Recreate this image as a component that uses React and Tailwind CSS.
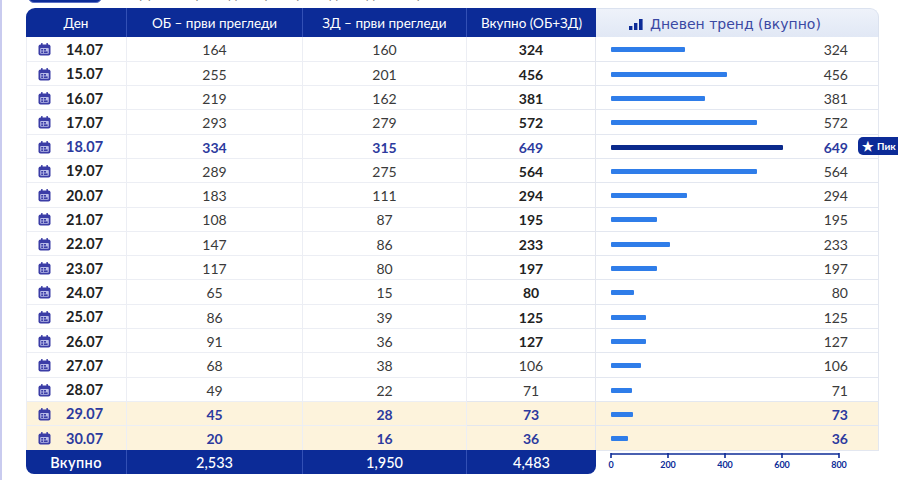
import React from "react";

const rows = [
  { d: "14.07", ob: 164, zd: 160, t: 324, w: 74 },
  { d: "15.07", ob: 255, zd: 201, t: 456, w: 116 },
  { d: "16.07", ob: 219, zd: 162, t: 381, w: 94 },
  { d: "17.07", ob: 293, zd: 279, t: 572, w: 146 },
  { d: "18.07", ob: 334, zd: 315, t: 649, w: 172, peak: true },
  { d: "19.07", ob: 289, zd: 275, t: 564, w: 146 },
  { d: "20.07", ob: 183, zd: 111, t: 294, w: 76 },
  { d: "21.07", ob: 108, zd: 87, t: 195, w: 46 },
  { d: "22.07", ob: 147, zd: 86, t: 233, w: 59 },
  { d: "23.07", ob: 117, zd: 80, t: 197, w: 46 },
  { d: "24.07", ob: 65, zd: 15, t: 80, w: 23 },
  { d: "25.07", ob: 86, zd: 39, t: 125, w: 35 },
  { d: "26.07", ob: 91, zd: 36, t: 127, w: 35 },
  { d: "27.07", ob: 68, zd: 38, t: 106, w: 30, light: true },
  { d: "28.07", ob: 49, zd: 22, t: 71, w: 21, light: true },
  { d: "29.07", ob: 45, zd: 28, t: 73, w: 22, hl: true },
  { d: "30.07", ob: 20, zd: 16, t: 36, w: 17, hl: true },
];

function CalIcon() {
  return (
    <svg width="13" height="13" viewBox="0 0 13 13">
      <rect x="0.5" y="1.5" width="12" height="11" rx="2" fill="#3b3da6" />
      <rect x="3" y="0" width="1.6" height="3" rx="0.6" fill="#3b3da6" />
      <rect x="8.4" y="0" width="1.6" height="3" rx="0.6" fill="#3b3da6" />
      <rect x="2.2" y="5" width="8.6" height="5.8" rx="0.8" fill="#b9bce8" />
      <rect x="3.2" y="6" width="2" height="1.6" fill="#3b3da6" />
      <rect x="6" y="6" width="2" height="1.6" fill="#3b3da6" />
      <rect x="3.2" y="8.4" width="2" height="1.6" fill="#3b3da6" />
      <rect x="6" y="8.4" width="3.6" height="1.6" fill="#3b3da6" />
    </svg>
  );
}

function TrendIcon() {
  return (
    <svg width="14" height="11" viewBox="0 0 14 11">
      <rect x="0" y="7" width="3.4" height="4" fill="#0c2b97" />
      <rect x="5" y="4" width="3.4" height="7" fill="#0c2b97" />
      <rect x="10" y="0" width="3.6" height="11" fill="#0c2b97" />
    </svg>
  );
}

export default function App() {
  return (
    <div
      className="w-[898px] h-[480px] overflow-hidden bg-white border-l-2 border-[#c9cbef]"
      style={{ fontFamily: "Lato, 'Noto Sans', sans-serif" }}
    >
      <div className="h-[8px] overflow-hidden flex items-end gap-[38px] pl-[26px]">
        <div className="w-[74px] h-[14px] mb-[5px] rounded-md bg-[#0c2b97] border border-[#5a6fc4] shrink-0" />
        <div className="h-[14px] mb-[7px] text-[13px] leading-[14px] text-[#888] whitespace-nowrap">
          Дневен преглед на први прегледи по ден и вкупно
        </div>
      </div>

      <div className="ml-[24px] w-[853px]">
        {/* header */}
        <div className="grid grid-cols-[101px_176px_164px_129px_283px] h-[29px] text-[13.5px]">
          <div className="bg-[#0c2b97] rounded-tl-[9px] text-white flex items-center justify-center pt-[2px] border-r border-[#3350b5]">
            Ден
          </div>
          <div className="bg-[#0c2b97] text-white flex items-center justify-center pt-[2px] border-r border-[#3350b5]">
            ОБ – први прегледи
          </div>
          <div className="bg-[#0c2b97] text-white flex items-center justify-center pt-[2px] border-r border-[#3350b5]">
            ЗД – први прегледи
          </div>
          <div className="bg-[#0c2b97] text-white flex items-center justify-center pt-[2px]">
            Вкупно (ОБ+ЗД)
          </div>
          <div className="bg-gradient-to-b from-[#eef2fa] to-[#e1e8f5] rounded-tr-[9px] border-r border-t border-[#dbe2ef] flex items-center pl-[33px] pt-[2px] gap-[7px] text-[#3a48a3]">
            <TrendIcon />
            <span className="text-[14px]" style={{ fontFamily: "'DejaVu Sans', sans-serif" }}>
              Дневен тренд (вкупно)
            </span>
          </div>
        </div>

        {/* rows */}
        {rows.map((r) => {
          const accent = r.peak || r.hl;
          const bg = r.hl ? "bg-[#fdf3dc]" : "bg-white";
          const numCls = accent
            ? "text-[#2c3a9e] font-bold"
            : "text-[#3a3a3a]";
          const totCls = accent
            ? "text-[#2c3a9e] font-bold"
            : r.light
            ? "text-[#3a3a3a]"
            : "text-[#222] font-bold";
          return (
            <div
              key={r.d}
              className={`grid grid-cols-[101px_176px_164px_129px_283px] h-[24.3px] text-[14px] ${bg}`}
            >
              <div className="flex items-center pl-[11px] pt-[2px] gap-[15px] border-r border-b border-[#eceef4] border-l border-l-[#eceef4]">
                <CalIcon />
                <span className={`font-bold text-[14.5px] ${accent ? "text-[#2c3a9e]" : "text-[#222]"}`}>
                  {r.d}
                </span>
              </div>
              <div className={`flex items-center justify-center pt-[2px] border-r border-b border-[#eceef4] ${numCls}`}>
                {r.ob}
              </div>
              <div className={`flex items-center justify-center pt-[2px] border-r border-b border-[#eceef4] ${numCls}`}>
                {r.zd}
              </div>
              <div className={`flex items-center justify-center pt-[2px] border-r border-b border-[#e3e6ee] ${totCls}`}>
                {r.t}
              </div>
              <div className="relative flex items-center pl-[15px] pr-[30px] pt-[2px] border-r border-b border-[#e3e7f0]">
                <div
                  className={`h-[5px] rounded-[1px] ${r.peak ? "bg-[#0b2a8c]" : "bg-[#2f7de9]"}`}
                  style={{ width: r.w }}
                />
                <span className={`ml-auto ${accent ? "text-[#2c3a9e] font-bold" : "text-[#3a3a3a]"}`}>
                  {r.t}
                </span>
                {r.peak && (
                  <div className="absolute left-[262px] top-[3px] h-[18px] w-[56px] rounded-[5px] bg-[#0c2b97] text-white text-[10px] font-bold flex items-center pl-[4px] gap-[3px] whitespace-nowrap">
                    <span className="text-[13px] leading-none">★</span>
                    <span>Пик</span>
                  </div>
                )}
              </div>
            </div>
          );
        })}

        {/* footer */}
        <div className="grid grid-cols-[101px_176px_164px_129px_283px] h-[24px] text-[14.5px] text-white">
          <div className="bg-[#0c2b97] rounded-bl-[8px] flex items-center justify-center pt-[1px] border-r border-[#3350b5] font-semibold tracking-[0.4px]">
            Вкупно
          </div>
          <div className="bg-[#0c2b97] flex items-center justify-center pt-[1px] border-r border-[#3350b5] font-medium">
            2,533
          </div>
          <div className="bg-[#0c2b97] flex items-center justify-center pt-[1px] border-r border-[#3350b5] font-medium">
            1,950
          </div>
          <div className="bg-[#0c2b97] rounded-br-[8px] flex items-center justify-center pt-[1px] font-medium">
            4,483
          </div>
          <div className="pl-[6px]">
            <svg width="250" height="24" viewBox="0 0 250 24">
              <line x1="9" y1="4" x2="237" y2="4" stroke="#0c2b97" strokeWidth="1.6" />
              {[9, 66, 123, 180, 237].map((x) => (
                <line key={x} x1={x} y1="3" x2={x} y2="8" stroke="#0c2b97" strokeWidth="1.6" />
              ))}
              {[
                [9, "0"],
                [66, "200"],
                [123, "400"],
                [180, "600"],
                [237, "800"],
              ].map(([x, t]) => (
                <text
                  key={t}
                  x={x}
                  y="17.5"
                  textAnchor="middle"
                  fontSize="9"
                  fontWeight="700"
                  fill="#0c2b97"
                  fontFamily="Lato, sans-serif"
                >
                  {t}
                </text>
              ))}
            </svg>
          </div>
        </div>
      </div>
    </div>
  );
}
